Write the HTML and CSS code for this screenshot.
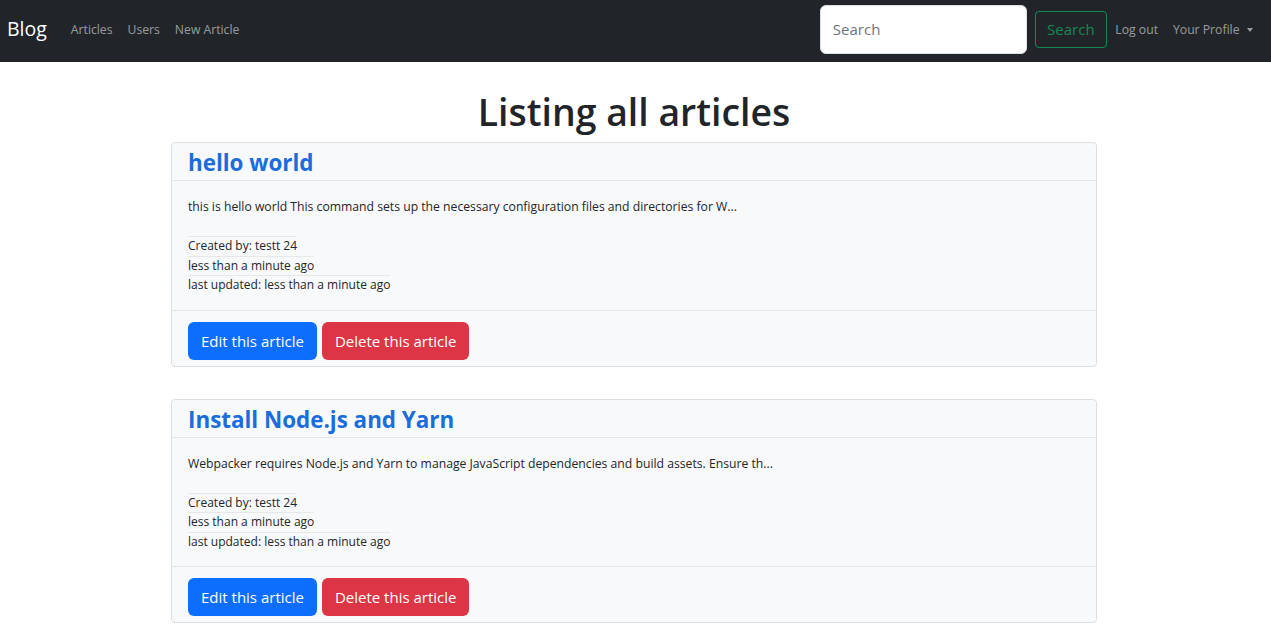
FILE: index.html
```html
<!DOCTYPE html>
<html lang="en">
<head>
<meta charset="utf-8">
<title>Blog</title>
<link rel="stylesheet" href="styles.css">
</head>
<body>
<nav class="navbar">
  <a class="brand" href="#">Blog</a>
  <ul class="nav-left">
    <li><a href="#">Articles</a></li>
    <li><a href="#">Users</a></li>
    <li><a href="#">New Article</a></li>
  </ul>
  <form class="search">
    <input class="search-input" type="search" placeholder="Search">
    <button class="btn-search" type="button">Search</button>
  </form>
  <ul class="nav-right">
    <li><a href="#">Log out</a></li>
    <li><a href="#" class="dropdown">Your Profile</a></li>
  </ul>
</nav>

<main class="container">
  <h1 class="page-title">Listing all articles</h1>

  <div class="card">
    <div class="card-header"><a class="card-title" href="#">hello world</a></div>
    <div class="card-body">
      <p class="excerpt">this is hello world This command sets up the necessary configuration files and directories for W...</p>
      <div class="meta"><span>Created by: testt 24</span></div>
      <div class="meta"><span>less than a minute ago</span></div>
      <div class="meta"><span>last updated: less than a minute ago</span></div>
    </div>
    <div class="card-footer">
      <a class="btn btn-primary" href="#">Edit this article</a>
      <a class="btn btn-danger" href="#">Delete this article</a>
    </div>
  </div>

  <div class="card">
    <div class="card-header"><a class="card-title" href="#">Install Node.js and Yarn</a></div>
    <div class="card-body">
      <p class="excerpt">Webpacker requires Node.js and Yarn to manage JavaScript dependencies and build assets. Ensure th...</p>
      <div class="meta"><span>Created by: testt 24</span></div>
      <div class="meta"><span>less than a minute ago</span></div>
      <div class="meta"><span>last updated: less than a minute ago</span></div>
    </div>
    <div class="card-footer">
      <a class="btn btn-primary" href="#">Edit this article</a>
      <a class="btn btn-danger" href="#">Delete this article</a>
    </div>
  </div>
</main>
</body>
</html>
```

FILE: styles.css
```css
* { box-sizing: border-box; }
html, body { margin: 0; padding: 0; }
body {
  font-family: "Open Sans", "Noto Sans", sans-serif;
  color: #212529;
  background: #fff;
  overflow: hidden;
}
a { text-decoration: none; }

.navbar {
  height: 62px;
  background: #212529;
  display: flex;
  align-items: center;
  padding: 0 11px 4px 7px;
}
.brand {
  color: #fff;
  font-size: 19.5px;
  line-height: 30px;
  margin-right: 24px;
}
.nav-left, .nav-right {
  list-style: none;
  margin: 0;
  padding: 0;
  display: flex;
}
.nav-left a, .nav-right a {
  color: rgba(255,255,255,0.55);
  font-size: 12.2px;
  display: block;
  padding: 8px 7.5px;
}
.nav-left li:first-child a { padding-left: 0; }
.search {
  margin-left: auto;
  margin-right: 1px;
  display: flex;
  align-items: center;
}
.search-input {
  width: 207px;
  height: 49px;
  border: 1px solid #dee2e6;
  border-radius: 6px;
  padding: 0 12px;
  font-family: inherit;
  font-size: 15px;
  color: #212529;
  background: #fff;
  outline: none;
}
.search-input::placeholder { color: #6c757d; }
.btn-search {
  margin-left: 8px;
  height: 37px;
  width: 72px;
  background: transparent;
  border: 1px solid #198754;
  border-radius: 4px;
  color: #198754;
  font-family: inherit;
  font-size: 15px;
  padding: 0;
}
.nav-right a { padding: 8px 7.5px; }
.dropdown::after {
  content: "";
  display: inline-block;
  margin-left: 7px;
  vertical-align: 2px;
  border-top: 4px solid;
  border-left: 3.5px solid transparent;
  border-right: 3.5px solid transparent;
}

.container {
  width: 926px;
  margin: 0 0 0 calc(50% - 464.5px);
}
.page-title {
  text-align: center;
  font-size: 37.4px;
  font-weight: 600;
  line-height: 48px;
  margin: 26px 0 6px;
  color: #212529;
}

.card {
  border: 1px solid #dcdfe2;
  border-radius: 4px;
  background: #f8f9fa;
  margin-bottom: 32px;
}
.card-header {
  padding: 5px 16px 2px;
  border-bottom: 1px solid #e3e5e7;
}
.card-title {
  color: #1a6ddb;
  font-size: 22.4px;
  font-weight: 700;
  line-height: 30px;
}
.card-body {
  padding: 16px 16px 15px;
  border-bottom: 1px solid #e3e5e7;
}
.excerpt {
  margin: 0 0 20px;
  font-size: 12.2px;
  line-height: 19px;
}
.meta {
  font-size: 12px;
  line-height: 18.5px;
}
.meta span {
  display: inline-block;
  vertical-align: top;
  border-top: 1px solid #e6e8ea;
}
.card-footer {
  padding: 11px 16px 6px;
  display: flex;
  gap: 5px;
}
.btn {
  display: inline-block;
  height: 38px;
  line-height: 36px;
  padding: 0 12px;
  border: 1px solid transparent;
  border-radius: 6px;
  color: #fff;
  font-size: 15px;
}
.btn-primary { background: #0d6efd; }
.btn-danger { background: #dc3545; }
```
